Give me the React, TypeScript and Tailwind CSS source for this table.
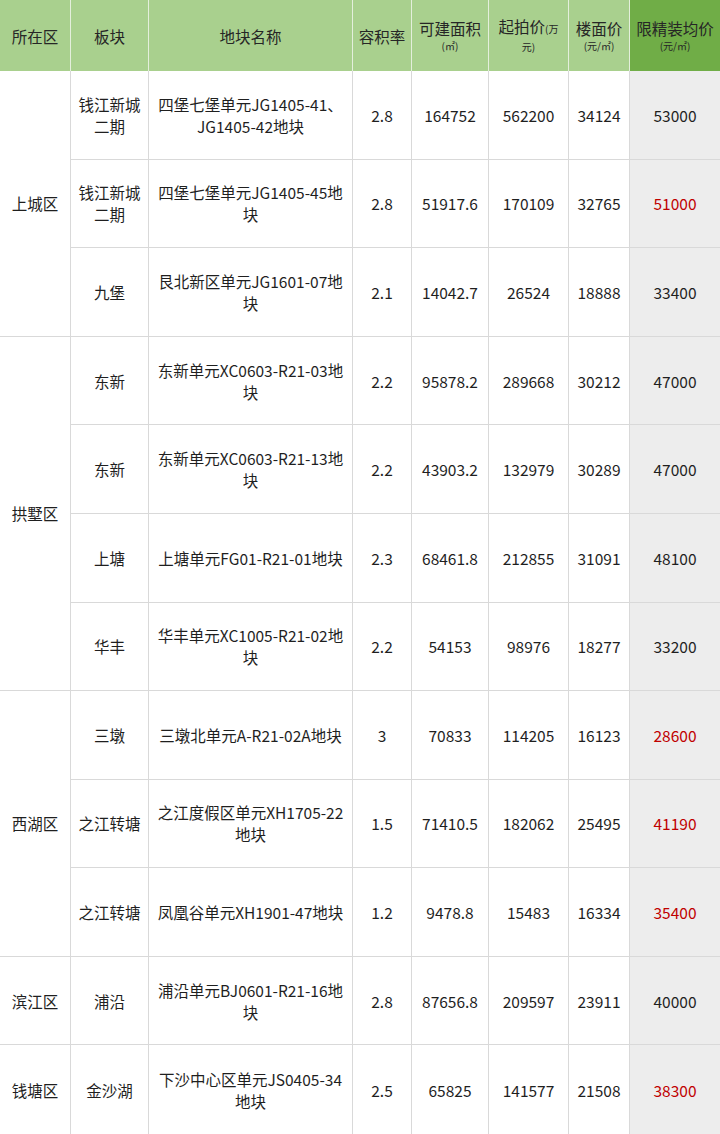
import React from "react"

type Row = {
  block: string[]
  name: string[]
  far: string
  area: string
  start: string
  floor: string
  cap: string
  red?: boolean
}

type Group = { district: string; rows: Row[] }

const groups: Group[] = [
  {
    district: "上城区",
    rows: [
      { block: ["钱江新城", "二期"], name: ["四堡七堡单元JG1405-41、", "JG1405-42地块"], far: "2.8", area: "164752", start: "562200", floor: "34124", cap: "53000" },
      { block: ["钱江新城", "二期"], name: ["四堡七堡单元JG1405-45地", "块"], far: "2.8", area: "51917.6", start: "170109", floor: "32765", cap: "51000", red: true },
      { block: ["九堡"], name: ["艮北新区单元JG1601-07地", "块"], far: "2.1", area: "14042.7", start: "26524", floor: "18888", cap: "33400" },
    ],
  },
  {
    district: "拱墅区",
    rows: [
      { block: ["东新"], name: ["东新单元XC0603-R21-03地", "块"], far: "2.2", area: "95878.2", start: "289668", floor: "30212", cap: "47000" },
      { block: ["东新"], name: ["东新单元XC0603-R21-13地", "块"], far: "2.2", area: "43903.2", start: "132979", floor: "30289", cap: "47000" },
      { block: ["上塘"], name: ["上塘单元FG01-R21-01地块"], far: "2.3", area: "68461.8", start: "212855", floor: "31091", cap: "48100" },
      { block: ["华丰"], name: ["华丰单元XC1005-R21-02地", "块"], far: "2.2", area: "54153", start: "98976", floor: "18277", cap: "33200" },
    ],
  },
  {
    district: "西湖区",
    rows: [
      { block: ["三墩"], name: ["三墩北单元A-R21-02A地块"], far: "3", area: "70833", start: "114205", floor: "16123", cap: "28600", red: true },
      { block: ["之江转塘"], name: ["之江度假区单元XH1705-22", "地块"], far: "1.5", area: "71410.5", start: "182062", floor: "25495", cap: "41190", red: true },
      { block: ["之江转塘"], name: ["凤凰谷单元XH1901-47地块"], far: "1.2", area: "9478.8", start: "15483", floor: "16334", cap: "35400", red: true },
    ],
  },
  {
    district: "滨江区",
    rows: [
      { block: ["浦沿"], name: ["浦沿单元BJ0601-R21-16地", "块"], far: "2.8", area: "87656.8", start: "209597", floor: "23911", cap: "40000" },
    ],
  },
  {
    district: "钱塘区",
    rows: [
      { block: ["金沙湖"], name: ["下沙中心区单元JS0405-34", "地块"], far: "2.5", area: "65825", start: "141577", floor: "21508", cap: "38300", red: true },
    ],
  },
]

const spanClass: Record<number, string> = {
  1: "row-span-1",
  3: "row-span-3",
  4: "row-span-4",
}

const head = "flex flex-col items-center justify-center bg-[#a9d08e] border-r border-[#e4efdc] text-[15.5px] leading-[20px] text-[#262626]"
const cell = "flex flex-col items-center justify-center border-r border-b border-[#d9d9d9] leading-[22px] whitespace-nowrap"

function Lines({ lines }: { lines: string[] }) {
  return (
    <>
      {lines.map((l, i) => (
        <span key={i}>{l}</span>
      ))}
    </>
  )
}

export default function App() {
  let rowIndex = 0
  const total = groups.reduce((n, g) => n + g.rows.length, 0)

  return (
    <div
      className="grid h-[1134px] w-[720px] grid-cols-[71px_78px_204px_59px_77px_80px_61px_90px] grid-rows-[71px_repeat(12,minmax(0,1fr))] bg-white text-[15.5px] text-[#1f1f1f]"
      style={{ fontFamily: '"Noto Sans CJK SC", "Noto Sans", sans-serif' }}
    >
      {/* header */}
      <div className={head}>所在区</div>
      <div className={head}>板块</div>
      <div className={head}>地块名称</div>
      <div className={head}>容积率</div>
      <div className={head}>
        <span>可建面积</span>
        <span className="text-[10px] leading-[16px]">(㎡)</span>
      </div>
      <div className={head}>
        <span>
          起拍价<span className="text-[10px]">(万</span>
        </span>
        <span className="text-[10px] leading-[16px]">元)</span>
      </div>
      <div className={head}>
        <span>楼面价</span>
        <span className="text-[10px] leading-[16px]">(元/㎡)</span>
      </div>
      <div className="flex flex-col items-center justify-center bg-[#70ad47] text-[15.5px] leading-[20px] text-[#262626]">
        <span>限精装均价</span>
        <span className="text-[10px] leading-[16px]">(元/㎡)</span>
      </div>

      {groups.map((g) => {
        const first = rowIndex
        rowIndex += g.rows.length
        const lastGroup = rowIndex === total
        return (
          <React.Fragment key={g.district}>
            <div
              className={`${cell} col-start-1 ${spanClass[g.rows.length]} ${lastGroup ? "border-b-0" : ""}`}
              style={{ gridRowStart: first + 2 }}
            >
              {g.district}
            </div>
            {g.rows.map((r, i) => {
              const last = first + i === total - 1
              const b = last ? "border-b-0" : ""
              return (
                <React.Fragment key={i}>
                  <div className={`${cell} ${b}`}>
                    <Lines lines={r.block} />
                  </div>
                  <div className={`${cell} ${b}`}>
                    <Lines lines={r.name} />
                  </div>
                  <div className={`${cell} ${b}`}>{r.far}</div>
                  <div className={`${cell} ${b}`}>{r.area}</div>
                  <div className={`${cell} ${b}`}>{r.start}</div>
                  <div className={`${cell} ${b}`}>{r.floor}</div>
                  <div
                    className={`${cell} ${b} border-r-0 bg-[#ededed] ${r.red ? "text-[#c00000]" : ""}`}
                  >
                    {r.cap}
                  </div>
                </React.Fragment>
              )
            })}
          </React.Fragment>
        )
      })}
    </div>
  )
}
